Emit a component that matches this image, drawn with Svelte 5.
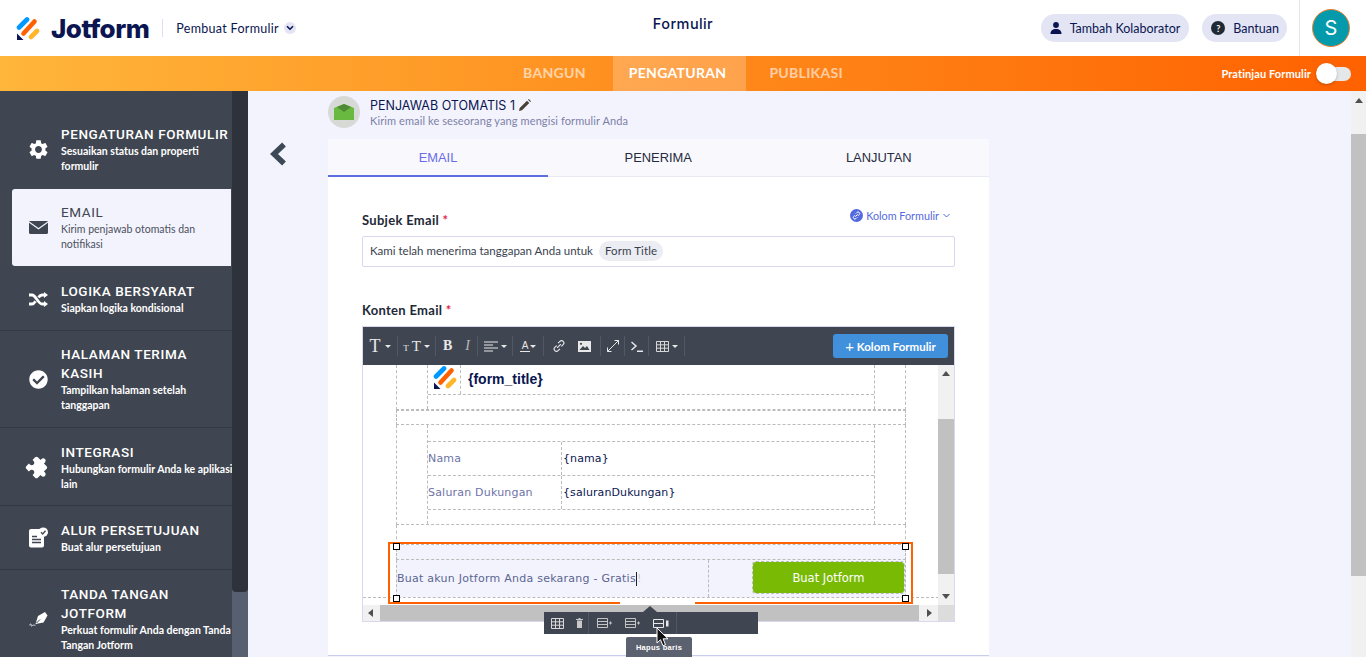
<script lang="ts">
  const menu = [
    { id: 'form', title: ['PENGATURAN FORMULIR'], sub: ['Sesuaikan status dan properti', 'formulir'], h: 77, up: true },
    { id: 'email', title: ['EMAIL'], sub: ['Kirim penjawab otomatis dan', 'notifikasi'], h: 77, active: true },
    { id: 'logic', title: ['LOGIKA BERSYARAT'], sub: ['Siapkan logika kondisional'], h: 65, low: true },
    { id: 'thanks', title: ['HALAMAN TERIMA', 'KASIH'], sub: ['Tampilkan halaman setelah', 'tanggapan'], h: 97 },
    { id: 'integ', title: ['INTEGRASI'], sub: ['Hubungkan formulir Anda ke aplikasi', 'lain'], h: 78, low: true },
    { id: 'flow', title: ['ALUR PERSETUJUAN'], sub: ['Buat alur persetujuan'], h: 64 },
    { id: 'sign', title: ['TANDA TANGAN', 'JOTFORM'], sub: ['Perkuat formulir Anda dengan Tanda', 'Tangan Jotform'], h: 97, low: true }
  ];
</script>

{#snippet logo(size)}
  <svg width={size} height={size} viewBox="0 0 24 24" class="logo-mark">
    <path d="M3 11.5 11 3.5" stroke="#0099ff" stroke-width="4.6" stroke-linecap="round" />
    <path d="M7.5 17.5 18.5 5.5" stroke="#ff6100" stroke-width="4.6" stroke-linecap="round" />
    <path d="M15 21 21 15" stroke="#ffb629" stroke-width="4.6" stroke-linecap="round" />
    <path d="M1 17.5V24h6.5z" fill="#0a1551" />
  </svg>
{/snippet}

<div class="page">
  <header class="top">
    <div class="brand">
      {@render logo(24)}
      <span class="wordmark">Jotform</span>
      <span class="brand-sep"></span>
      <span class="builder">Pembuat Formulir</span>
      <span class="builder-caret">
        <svg width="8" height="6" viewBox="0 0 8 6"><path d="M1 1.2 4 4.2 7 1.2" fill="none" stroke="#0a1551" stroke-width="1.6" /></svg>
      </span>
    </div>
    <div class="form-title">Formulir</div>
    <div class="actions">
      <button class="pill" type="button">
        <svg width="12" height="12" viewBox="0 0 12 12"><circle cx="6" cy="3" r="2.9" fill="#0a1551" /><path d="M.5 12c0-3.2 2-5 5.5-5s5.5 1.800 5.5 5z" fill="#0a1551" /></svg>
        Tambah Kolaborator
      </button>
      <button class="pill help" type="button">
        <span class="q">?</span>
        Bantuan
      </button>
      <div class="user"><span class="avatar">S</span></div>
    </div>
  </header>

  <nav class="tabs-bar">
    <div></div>
    <div class="nav-items">
      <span>BANGUN</span>
      <span class="on">PENGATURAN</span>
      <span>PUBLIKASI</span>
    </div>
    <div class="preview">
      Pratinjau Formulir
      <span class="switch"><span class="knob"></span></span>
    </div>
  </nav>

  <div class="body">
    <aside class="side">
      {#each menu as item}
        <div class="item" class:active={item.active} class:low={item.low} class:up={item.up} style="height:{item.h}px">
          <span class="item-icon">
            {#if item.id === 'form'}
              <svg width="23" height="23" viewBox="0 0 24 24" fill="currentColor"><path d="M19.14 12.94c.04-.3.06-.61.06-.94 0-.32-.02-.64-.07-.94l2.03-1.58c.18-.14.23-.41.12-.61l-1.92-3.32c-.12-.22-.37-.29-.59-.22l-2.39.96c-.5-.38-1.03-.7-1.62-.94l-.36-2.54c-.04-.24-.24-.41-.48-.41h-3.84c-.24 0-.43.17-.47.41l-.36 2.54c-.59.24-1.13.57-1.62.94l-2.39-.96c-.22-.08-.47 0-.59.22L2.74 8.87c-.12.21-.08.47.12.61l2.03 1.58c-.05.3-.09.63-.09.94s.02.64.07.94l-2.03 1.58c-.18.14-.23.41-.12.61l1.92 3.32c.12.22.37.29.59.22l2.39-.96c.5.38 1.03.7 1.62.94l.36 2.54c.05.24.24.41.48.41h3.84c.24 0 .44-.17.47-.41l.36-2.54c.59-.24 1.13-.56 1.62-.94l2.39.96c.22.08.47 0 .59-.22l1.92-3.32c.12-.22.07-.47-.12-.61l-2.01-1.58zM12 15.6c-1.98 0-3.6-1.62-3.6-3.6s1.620-3.600 3.600-3.600 3.600 1.620 3.600 3.600-1.620 3.600-3.600 3.600z" /></svg>
            {:else if item.id === 'email'}
              <svg width="19" height="13" viewBox="0 0 19 13"><path d="M1 0h17c.4 0 .7.1 1 .3L9.500 7 0 .3C.3.100.6 0 1 0zM0 1.700 9.500 8.500 19 1.700V11.500c0 .8-.6 1.500-1.500 1.500h-16C.6 13 0 12.300 0 11.500z" fill="currentColor" /></svg>
            {:else if item.id === 'logic'}
              <svg width="19" height="15" viewBox="0 0 19 15" fill="none" stroke="currentColor" stroke-width="2.800"><path d="M0 3h3c4 0 6 9 10 9h2M0 12h3c1.500 0 2.500-1.300 3.500-2.800M9.500 5.300C10.500 4 11.500 3 13 3h2" /><path d="M15 0l4 3-4 3zM15 9l4 3-4 3z" fill="currentColor" stroke="none" /></svg>
            {:else if item.id === 'thanks'}
              <svg width="19" height="19" viewBox="0 0 512 512" fill="currentColor"><path d="M504 256c0 136.967-111.033 248-248 248S8 392.967 8 256 119.033 8 256 8s248 111.033 248 248zM227.314 387.314l184-184c6.248-6.248 6.248-16.379 0-22.627l-22.627-22.627c-6.248-6.249-16.379-6.249-22.628 0L216 308.118l-70.059-70.059c-6.248-6.248-16.379-6.248-22.628 0l-22.627 22.627c-6.248 6.248-6.248 16.379 0 22.627l104 104c6.249 6.249 16.379 6.249 22.628.001z" /></svg>
            {:else if item.id === 'integ'}
              <svg width="23" height="23" viewBox="0 0 24 24" fill="currentColor" transform="rotate(45)"><path d="M20.500 11H19V7c0-1.100-.9-2-2-2h-4V3.500C13 2.120 11.880 1 10.500 1S8 2.120 8 3.500V5H4c-1.100 0-1.990.9-1.990 2v3.800H3.500c1.490 0 2.700 1.210 2.700 2.700s-1.210 2.700-2.700 2.700H2V20c0 1.100.9 2 2 2h3.800v-1.500c0-1.490 1.210-2.700 2.700-2.700 1.490 0 2.700 1.210 2.700 2.700V22H17c1.100 0 2-.9 2-2v-4h1.500c1.380 0 2.500-1.120 2.500-2.500S21.880 11 20.500 11z" /></svg>
            {:else if item.id === 'flow'}
              <svg width="19" height="21" viewBox="0 0 19 21"><path d="M2 2h9.500a6 6 0 0 0 3.500 8V18.500a2 2 0 0 1-2 2H2a2 2 0 0 1-2-2V4a2 2 0 0 1 2-2z" fill="currentColor" /><path d="M3 9.500h5M3 12.500h9M3 15.500h9" stroke="#404651" stroke-width="1.300" /><circle cx="14.200" cy="5.200" r="4.800" fill="currentColor" /><path d="M12 5.300 13.700 7 16.500 3.800" fill="none" stroke="#404651" stroke-width="1.300" /></svg>
            {:else}
              <svg width="19" height="16" viewBox="0 0 19 16"><path d="M9 5 16 1l2.500 3.500L14.500 11.500 6.500 13z" fill="currentColor" /><path d="M7.500 12 11 8.500" stroke="#404651" stroke-width="1" /><path d="M0 14.500c1-1 1.500-2 2-1.500s-.5 2 .5 2 1-1 2-1 1 .7 2 .2" fill="none" stroke="currentColor" stroke-width=".8" /></svg>
            {/if}
          </span>
          <div class="item-text">
            {#each item.title as line}<div class="item-title">{line}</div>{/each}
            {#each item.sub as line}<div class="item-sub">{line}</div>{/each}
          </div>
        </div>
      {/each}
    </aside>
    <div class="side-scroll"><div class="side-thumb"></div></div>

    <main class="content">
      <div class="back-col">
        <svg width="19" height="24" viewBox="0 0 19 24"><path d="M16 2.500 6 12l10 9.500" fill="none" stroke="#3d4856" stroke-width="5.500" /></svg>
      </div>
      <div class="form-col">
        <div class="resp-head">
          <span class="resp-icon">
            <svg width="20" height="16" viewBox="0 0 20 16"><path d="M0 4 10 0l10 4v12H0z" fill="#69b83f" /><path d="M3 3 10 0l7 3-7 5z" fill="#4f8a35" /></svg>
          </span>
          <div>
            <div class="resp-title">
              PENJAWAB OTOMATIS 1
              <svg width="12" height="12" viewBox="0 0 12 12"><path d="M0 12l.7-3L8 1.700 10.300 4 3 11.300zM9 .8l.8-.8L12 2.200l-.8.8z" fill="#4a4038" /></svg>
            </div>
            <div class="resp-sub">Kirim email ke seseorang yang mengisi formulir Anda</div>
          </div>
        </div>

        <div class="panel">
          <div class="panel-tabs">
            <span class="tab on">EMAIL</span>
            <span class="tab">PENERIMA</span>
            <span class="tab">LANJUTAN</span>
          </div>
          <div class="panel-body">
            <div class="field-head">
              <label class="field-label" for="subject">Subjek Email <em>*</em></label>
              <span class="form-fields">
                <span class="link-dot">
                  <svg width="9" height="9" viewBox="0 0 9 9" fill="none" stroke="#fff" stroke-width="1"><path d="M3.800 2.600 5 1.400a1.500 1.500 0 0 1 2.200 2.200L6 4.800M5.200 6.400 4 7.600A1.500 1.500 0 0 1 1.800 5.400L3 4.200M3.300 5.700l2.400-2.400" /></svg>
                </span>
                Kolom Formulir
                <svg width="7" height="5" viewBox="0 0 7 5" class="ff-caret"><path d="M.5 1 3.500 4 6.500 1" fill="none" stroke="#5369e0" stroke-width="1" /></svg>
              </span>
            </div>
            <div class="subject" id="subject">
              Kami telah menerima tanggapan Anda untuk
              <span class="chip">Form Title</span>
            </div>

            <div class="field-label content-label">Konten Email <em>*</em></div>
            <div class="editor">
              <div class="toolbar">
                <span class="t-btn t-serif big">T<i class="caret"></i></span>
                <b class="t-sep"></b>
                <span class="t-btn t-serif"><small>T</small>T<i class="caret"></i></span>
                <b class="t-sep"></b>
                <span class="t-btn wide"><span class="t-bold">B</span><span class="t-ital">I</span></span>
                <b class="t-sep"></b>
                <span class="t-btn">
                  <svg width="14" height="11" viewBox="0 0 14 11" stroke="#e8e8e8" stroke-width="1.200"><path d="M0 1h14M0 4h9M0 7h14M0 10h9" /></svg>
                  <i class="caret"></i>
                </span>
                <b class="t-sep"></b>
                <span class="t-btn tight">
                  <span class="a-color">A</span><i class="caret"></i>
                </span>
                <b class="t-sep"></b>
                <span class="t-btn wide">
                  <svg width="12" height="12" viewBox="0 0 13 13" fill="none" stroke="#e8e8e8" stroke-width="1.200"><path d="M5.500 3.500 7.500 1.500a2.400 2.400 0 0 1 3.500 3.500L9 7M7.500 9.500 5.500 11.500A2.400 2.400 0 0 1 2 8l2-2M4.500 8.500l4-4" /></svg>
                  <svg width="13" height="11" viewBox="0 0 13 11"><path d="M0 0h13v11H0z" fill="#e8e8e8" /><path d="M1.500 9 5 5l2 2 2-2 2.500 4z" fill="#3f4551" /><circle cx="3" cy="2.800" r="1.100" fill="#3f4551" /></svg>
                </span>
                <b class="t-sep"></b>
                <span class="t-btn">
                  <svg width="12" height="12" viewBox="0 0 12 12" fill="none" stroke="#e8e8e8" stroke-width="1"><path d="M.5 11.500 11.500.5M7.500.5h4v4M.5 7.500v4h4" /></svg>
                </span>
                <b class="t-sep"></b>
                <span class="t-btn">
                  <svg width="12" height="11" viewBox="0 0 12 11" fill="none" stroke="#e8e8e8" stroke-width="1.500"><path d="M.5 1 5 5 .5 9M6 10.200h6" /></svg>
                </span>
                <b class="t-sep"></b>
                <span class="t-btn">
                  <svg width="13" height="11" viewBox="0 0 13 11" fill="none" stroke="#d8d8d8" stroke-width="1"><path d="M.5.500h12v10H.5zM.5 3.800h12M.5 7.200h12M4.500.5v10M8.500.5v10" /></svg>
                  <i class="caret"></i>
                </span>
                <b class="t-sep"></b>
                <button class="add-field" type="button"><span>+</span> Kolom Formulir</button>
              </div>

              <div class="frame">
                <div class="doc-wrap">
                  <div class="doc">
                    <div class="d-row r-top">
                      <div class="inner">
                        <div class="logo-row">
                          <div class="logo-cell">{@render logo(24)}</div>
                          <div class="doc-title">&#123;form_title&#125;</div>
                        </div>
                      </div>
                    </div>
                    <div class="d-row r-gap"></div>
                    <div class="d-row r-data">
                      <div class="inner data">
                        <div class="data-row">
                          <div class="k">Nama</div>
                          <div class="v">&#123;nama&#125;</div>
                        </div>
                        <div class="data-row">
                          <div class="k">Saluran Dukungan</div>
                          <div class="v">&#123;saluranDukungan&#125;</div>
                        </div>
                      </div>
                    </div>
                    <div class="d-row r-before"></div>
                    <div class="d-row r-sel-top"></div>
                    <div class="d-row r-cta">
                      <div class="cta-text">Buat akun Jotform Anda sekarang - Gratis<span class="text-caret"></span><span class="faint">!</span></div>
                      <div class="cta-btn-cell"><div class="cta-btn">Buat Jotform</div></div>
                    </div>
                    <div class="r-end"></div>
                  </div>
                </div>
                <div class="v-scroll">
                  <span class="arr up"></span>
                  <div class="v-track"><div class="v-thumb"></div></div>
                  <span class="arr down"></span>
                </div>
                <div class="h-scroll">
                  <span class="arr left"></span>
                  <div class="h-track"><div class="h-thumb"></div></div>
                  <span class="arr right"></span>
                  <span class="corner"></span>
                </div>

                <!-- selection box and its floating tools lie over the document -->
                <div class="sel">
                  <i class="sel-b one"></i><i class="sel-b two"></i>
                  <i class="handle tl"></i><i class="handle tr"></i><i class="handle bl"></i><i class="handle br"></i>
                </div>
              </div>
            </div>
          </div>
        </div>
      </div>

      <div class="table-tools">
        <i class="tool-arrow"></i>
        <svg width="13" height="11" viewBox="0 0 13 11" fill="none" stroke="#d8d8d8" stroke-width="1"><path d="M.5.500h12v10H.5zM.5 3.800h12M.5 7.200h12M4.500.5v10M8.500.5v10" /></svg>
        <svg width="7" height="10" viewBox="0 0 7 10" class="trash"><path d="M0 1h7v1H0zM1 2.500h5V10H1zM2.500 0h2v1h-2z" fill="#c9c9c9" /></svg>
        <b class="tool-sep"></b>
        <svg width="15" height="10" viewBox="0 0 15 10" fill="none" stroke="#c4c4c4" class="row-a"><path d="M.5.500h10v9H.5zM.5 3.500h10M.5 6.500h10M12 5h3M13.500 3.500v3" /></svg>
        <svg width="15" height="10" viewBox="0 0 15 10" fill="none" stroke="#c4c4c4" class="row-b"><path d="M.5.500h10v9H.5zM.5 3.500h10M.5 6.500h10M12 5h3M13.500 3.500v3" /></svg>
        <svg width="16" height="9" viewBox="0 0 16 9" class="row-b"><path d="M.5.500h10v8H.5zM.5 4.500h10" fill="none" stroke="#e8e8e8" /><path d="M13 1.500h2.500v6H13z" fill="#e8e8e8" /></svg>
        <b class="tool-sep last"></b>
      </div>
      <div class="tool-tip">Hapus baris</div>
      <svg class="cursor" width="13" height="20" viewBox="0 0 13 20"><path d="M1 1v15l3.500-3.300 2.400 6 2.600-1.100-2.400-5.800H12z" fill="#111" stroke="#fff" stroke-width="1" /></svg>

      <div class="page-scroll">
        <span class="arr up"></span>
        <div class="page-thumb"></div>
      </div>
    </main>
  </div>
</div>

<style>
  :global(body) {
    margin: 0;
    font-family: Inter, "Noto Sans", sans-serif;
    color: #0a1551;
  }

  .page {
    height: 657px;
    overflow: hidden;
    display: flex;
    flex-direction: column;
    background: #f3f3fe;
  }

  /* top bar */
  .top {
    height: 56px;
    flex: none;
    background: #fff;
    display: grid;
    grid-template-columns: 1fr auto 1fr;
    align-items: center;
  }
  .brand {
    display: flex;
    align-items: center;
    padding-left: 16px;
  }
  .logo-mark {
    display: block;
    flex: none;
  }
  .wordmark {
    margin-left: 11px;
    font-size: 26px;
    font-weight: 800;
    letter-spacing: -0.5px;
    font-family: Inter, sans-serif;
  }
  .brand-sep {
    width: 1px;
    height: 18px;
    background: #dfe0ee;
    margin: 0 13px 0 13px;
  }
  .builder {
    font-size: 12.5px;
    font-family: Lato, sans-serif;
    letter-spacing: 0.3px;
  }
  .builder-caret {
    width: 12px;
    height: 12px;
    margin-left: 5px;
    border-radius: 50%;
    background: #e3e5f5;
    display: flex;
    align-items: center;
    justify-content: center;
  }
  .form-title {
    font-size: 14.5px;
    font-weight: 500;
    margin-top: -10px;
    letter-spacing: 0.4px;
  }
  .actions {
    display: flex;
    align-items: center;
    justify-content: flex-end;
    height: 56px;
  }
  .pill {
    height: 28px;
    border: 0;
    border-radius: 14px;
    background: #e3e5f5;
    color: #0a1551;
    display: flex;
    align-items: center;
    gap: 8px;
    padding: 0 9px;
    font-family: Lato, sans-serif;
    font-size: 12.5px;
    margin-right: 13px;
  }
  .pill.help {
    margin-right: 12px;
    padding-right: 8px;
  }
  .q {
    width: 14px;
    height: 14px;
    border-radius: 50%;
    background: #1f2a35;
    color: #fff;
    font-size: 9px;
    font-weight: 700;
    display: flex;
    align-items: center;
    justify-content: center;
  }
  .user {
    height: 56px;
    border-left: 1px solid #e3e5e8;
    padding: 0 16px 0 12px;
    display: flex;
    align-items: center;
  }
  .avatar {
    width: 36px;
    height: 36px;
    border-radius: 50%;
    background: #049aab;
    border: 1px solid #f08030;
    color: #fff;
    font-size: 20px;
    display: flex;
    align-items: center;
    justify-content: center;
  }

  /* orange nav */
  .tabs-bar {
    height: 35px;
    flex: none;
    background: linear-gradient(90deg, #ffb63a 0%, #ff6100 100%);
    display: grid;
    grid-template-columns: 1fr auto 1fr;
    color: #fff;
  }
  .nav-items {
    display: flex;
    align-items: stretch;
    font-family: Lato, sans-serif;
    font-size: 14px;
    font-weight: 700;
    letter-spacing: 0.3px;
  }
  .nav-items span {
    display: flex;
    align-items: center;
    padding-bottom: 3px;
    opacity: 0.6;
  }
  .nav-items span:first-child {
    margin-right: 27px;
  }
  .nav-items .on {
    opacity: 1;
    background: rgba(255, 255, 255, 0.22);
    padding: 0 20px 3px 16px;
    margin-right: 23px;
  }
  .preview {
    display: flex;
    align-items: center;
    justify-content: flex-end;
    font-family: Lato, sans-serif;
    font-size: 11px;
    font-weight: 700;
    letter-spacing: 0.1px;
    padding-right: 15px;
  }
  .switch {
    width: 32px;
    height: 14px;
    margin-left: 8px;
    border-radius: 7px;
    background: #e5e8ea;
    position: relative;
  }
  .knob {
    position: absolute;
    left: -3px;
    top: -4px;
    width: 21px;
    height: 21px;
    border-radius: 50%;
    background: #fff;
    box-shadow: 0 1px 3px rgba(0, 0, 0, 0.25);
  }

  /* body */
  .body {
    flex: 1;
    min-height: 0;
    display: flex;
  }
  .side {
    width: 232px;
    flex: none;
    background: #404651;
    padding-top: 21px;
    overflow: hidden;
    color: #fff;
  }
  .item {
    box-sizing: border-box;
    display: flex;
    align-items: center;
    padding-left: 29px;
    border-bottom: 1px solid #343a44;
  }
  .item.low {
    padding-top: 2px;
  }
  .item.up {
    padding-bottom: 2px;
  }
  .item:first-child,
  .item.active {
    border-bottom: 0;
  }
  .item.active {
    background: #f3f3fe;
    color: #3f4551;
    margin-left: 12px;
    margin-right: 1px;
    padding-left: 17px;
    border-radius: 3px 0 0 3px;
  }
  .item-icon {
    width: 19px;
    height: 24px;
    flex: none;
    display: flex;
    align-items: center;
    justify-content: center;
  }
  .item-icon svg {
    flex: none;
  }
  .item-text {
    margin-left: 13px;
    white-space: nowrap;
  }
  .item-title {
    font-family: Roboto, sans-serif;
    font-size: 13.5px;
    line-height: 19px;
    font-weight: 500;
    letter-spacing: 0.6px;
  }
  .item-sub {
    font-family: Lato, sans-serif;
    font-size: 10.5px;
    line-height: 15px;
    font-weight: 700;
  }
  .item.active .item-title {
    font-weight: 400;
  }
  .item.active .item-sub {
    font-weight: 400;
    color: #4b505c;
  }
  .side-scroll {
    width: 16px;
    flex: none;
    background: #566070;
  }
  .side-thumb {
    height: 501px;
    background: #2e323b;
    border-radius: 0 0 4px 4px;
  }

  .content {
    flex: 1;
    min-width: 0;
    display: flex;
    position: relative;
    overflow: hidden;
  }
  .back-col {
    width: 80px;
    flex: none;
    padding-top: 51px;
    padding-left: 20px;
    box-sizing: border-box;
  }
  .form-col {
    width: 661px;
    flex: none;
  }
  .resp-head {
    height: 48px;
    display: flex;
    align-items: flex-start;
    gap: 10px;
    padding-top: 5px;
    box-sizing: border-box;
  }
  .resp-icon {
    width: 32px;
    height: 32px;
    border-radius: 50%;
    background: #d7d9d6;
    display: flex;
    align-items: center;
    justify-content: center;
  }
  .resp-title {
    font-size: 12.5px;
    line-height: 16px;
    margin-top: 2px;
    font-family: Inter, sans-serif;
  }
  .resp-title svg {
    vertical-align: -1px;
  }
  .resp-sub {
    font-family: Lato, sans-serif;
    font-size: 11px;
    line-height: 15px;
    margin-top: -1px;
    letter-spacing: 0.1px;
    color: #7c81a6;
  }
  .panel {
    height: 516px;
    background: #fff;
    border-bottom: 1px solid #c9cdf0;
  }
  .panel-tabs {
    display: grid;
    grid-template-columns: 220px 1fr 1fr;
    height: 38px;
    background: #f9f9fd;
    box-shadow: inset 0 -1px 0 #e8e9f5;
  }
  .tab {
    display: flex;
    align-items: center;
    justify-content: center;
    padding-bottom: 2px;
    font-family: "Liberation Sans", sans-serif;
    font-size: 12.9px;
    color: #272b3f;
  }
  .tab.on {
    color: #6a6be8;
    box-shadow: inset 0 -2px 0 #5c6fe0;
  }
  .panel-body {
    padding: 35px 34px 0;
  }
  .field-head {
    display: flex;
    justify-content: space-between;
    align-items: flex-start;
    height: 24px;
  }
  .field-label {
    font-family: Lato, sans-serif;
    font-size: 13px;
    font-weight: 700;
    line-height: 16px;
    letter-spacing: 0.3px;
    color: #222836;
    display: block;
  }
  .field-label em {
    font-style: normal;
    color: #e0264f;
  }
  .form-fields {
    display: flex;
    align-items: center;
    gap: 3px;
    margin: -3px 5px 0 0;
    font-family: Lato, sans-serif;
    font-size: 10.8px;
    color: #5369e0;
  }
  .ff-caret {
    margin-left: 1px;
  }
  .link-dot {
    width: 13px;
    height: 13px;
    border-radius: 50%;
    background: #5369e0;
    display: flex;
    align-items: center;
    justify-content: center;
  }
  .subject {
    height: 29px;
    border: 1px solid #d8d9ee;
    border-radius: 2px;
    display: flex;
    align-items: center;
    gap: 6px;
    padding: 0 0 2px 7px;
    box-sizing: content-box;
    height: 27px;
    font-family: Lato, sans-serif;
    font-size: 11.5px;
    color: #3a3f4f;
  }
  .chip {
    height: 20px;
    padding: 0 6px;
    border-radius: 10px;
    background: #ecedf3;
    display: flex;
    align-items: center;
    letter-spacing: 0.1px;
  }
  .content-label {
    margin-top: 35px;
    margin-bottom: 8px;
  }

  /* editor */
  .editor {
    width: 593px;
    border: 1px solid #d8d9ee;
    box-sizing: border-box;
  }
  .toolbar {
    height: 38px;
    background: #3f4551;
    display: grid;
    grid-template-columns: 34px 1px 37px 1px 41px 1px 34px 1px 30px 1px 56px 1px 23px 1px 23px 1px 35px 1px 1fr;
    align-items: center;
    color: #e8e8e8;
  }
  .t-btn {
    display: flex;
    align-items: center;
    justify-content: center;
    gap: 3px;
    font-size: 13px;
    height: 38px;
  }
  .t-btn.wide {
    gap: 13px;
  }
  .t-btn.tight {
    gap: 0;
  }
  .t-serif {
    font-family: "Liberation Serif", serif;
    font-size: 15px;
  }
  .t-serif small {
    font-size: 9px;
    margin-top: 4px;
  }
  .t-serif.big {
    font-size: 18px;
    gap: 4px;
  }
  .t-bold {
    font-family: "Liberation Serif", serif;
    font-size: 14px;
    font-weight: 700;
  }
  .t-ital {
    font-family: "Liberation Serif", serif;
    font-size: 14px;
    font-style: italic;
    color: #bbb;
  }
  .caret {
    width: 0;
    height: 0;
    border: 3px solid transparent;
    border-top-color: #e8e8e8;
    border-bottom: 0;
  }
  .a-color {
    font-family: "Liberation Sans", sans-serif;
    font-size: 10px;
    line-height: 11px;
    border-bottom: 1px solid #e8e8e8;
    padding: 0 2px;
  }
  .t-sep {
    width: 1px;
    height: 20px;
    background: #525865;
  }
  .add-field {
    justify-self: end;
    margin-right: 6px;
    width: 115px;
    height: 24px;
    border: 0;
    border-radius: 3px;
    background: #4190dc;
    color: #fff;
    font-family: Lato, sans-serif;
    font-size: 11.5px;
    font-weight: 700;
  }
  .add-field span {
    font-size: 15px;
    font-weight: 400;
    line-height: 10px;
    vertical-align: -1px;
  }
  .frame {
    height: 256px;
    position: relative;
    display: grid;
    grid-template-columns: 1fr 16px;
    grid-template-rows: 240px 16px;
  }
  .doc-wrap {
    overflow: hidden;
    padding-left: 33px;
  }
  .doc {
    width: 510px;
    font-family: "DejaVu Sans", sans-serif;
  }
  .d-row {
    box-sizing: border-box;
    border: 1px dashed #bbb;
    border-top: 0;
    background: #fff;
  }
  .r-top {
    height: 45px;
    padding-left: 30px;
  }
  .r-gap {
    height: 15px;
    border-top: 1px dashed #bbb;
  }
  .r-data {
    height: 100px;
    padding-left: 30px;
  }
  .r-before {
    height: 20px;
    background: linear-gradient(#fff 17px, #f3f3fe 17px);
  }
  .r-sel-top {
    height: 15px;
    background: #f3f3fe;
  }
  .r-cta {
    height: 37px;
    display: grid;
    grid-template-columns: 312px 1fr;
    background: #f3f3fe;
    border-bottom: 0;
  }
  .r-end {
    height: 8px;
    margin: 0 -33px;
    border-top: 1px dashed #bbb;
  }
  .inner {
    width: 448px;
    box-sizing: border-box;
    height: 100%;
    border-left: 1px dashed #bbb;
    border-right: 1px dashed #bbb;
  }
  .logo-row {
    height: 29px;
    display: flex;
    align-items: center;
    border-bottom: 1px dashed #bbb;
  }
  .logo-cell {
    width: 33px;
    height: 29px;
    box-sizing: border-box;
    padding-left: 5px;
    border-right: 1px dashed #bbb;
    display: flex;
    align-items: flex-start;
  }
  .doc-title {
    font-family: "Liberation Sans", sans-serif;
    font-weight: 700;
    font-size: 14px;
    margin-left: 7px;
    margin-top: -1px;
  }
  .inner.data {
    padding-top: 16px;
  }
  .data-row {
    display: grid;
    grid-template-columns: 134px 1fr;
    height: 33px;
    border-top: 1px dashed #bbb;
    font-size: 11px;
  }
  .data-row:last-child {
    border-bottom: 1px dashed #bbb;
  }
  .k {
    color: #6d73a6;
    display: flex;
    align-items: center;
    letter-spacing: 0.2px;
    border-right: 1px dashed #bbb;
  }
  .v {
    display: flex;
    align-items: center;
    padding-left: 1px;
    letter-spacing: 0.1px;
    color: #0a1551;
  }
  .cta-text {
    border-right: 1px dashed #bbb;
    font-size: 11px;
    letter-spacing: 0.25px;
    color: #5a6690;
    display: flex;
    align-items: center;
    white-space: nowrap;
  }
  .text-caret {
    width: 1px;
    height: 14px;
    background: #222;
  }
  .faint {
    color: #c6c8d8;
  }
  .cta-btn-cell {
    padding: 2px 1px 0 44px;
  }
  .cta-btn {
    height: 31px;
    outline: 1px dashed #bbb;
    background: #79ba05;
    border-radius: 3px;
    color: #fff;
    font-size: 11.5px;
    display: flex;
    align-items: center;
    justify-content: center;
  }

  .arr {
    width: 0;
    height: 0;
    border: 4px solid transparent;
    display: block;
  }
  .arr.up {
    border-bottom: 5px solid #505050;
    border-top: 0;
  }
  .arr.down {
    border-top: 5px solid #505050;
    border-bottom: 0;
  }
  .arr.left {
    border-right: 5px solid #505050;
    border-left: 0;
  }
  .arr.right {
    border-left: 5px solid #505050;
    border-right: 0;
  }
  .v-scroll {
    background: #f1f1f1;
    display: flex;
    flex-direction: column;
    align-items: center;
    justify-content: space-between;
    padding: 6px 0;
    box-sizing: border-box;
  }
  .v-track {
    flex: 1;
    width: 16px;
  }
  .v-thumb {
    height: 155px;
    margin-top: 43px;
    background: #c1c1c1;
  }
  .h-scroll {
    grid-column: 1 / 3;
    background: #f1f1f1;
    display: flex;
    align-items: center;
    padding-left: 5px;
  }
  .h-track {
    flex: 1;
    height: 16px;
    padding: 0 8px 0 7px;
  }
  .h-thumb {
    height: 16px;
    background: #c1c1c1;
  }
  .h-scroll .arr.right {
    margin-right: 6px;
  }
  .corner {
    width: 16px;
    height: 16px;
    background: #dcdcdc;
  }
  .sel {
    position: absolute;
    left: 25px;
    top: 177px;
    width: 525px;
    height: 62px;
    box-sizing: border-box;
    border: 2px solid #ff6100;
    border-bottom: 0;
  }
  .sel-b {
    position: absolute;
    bottom: 0;
    height: 2px;
    background: #ff6100;
  }
  .sel-b.one {
    left: -2px;
    width: 232px;
  }
  .sel-b.two {
    right: -2px;
    width: 218px;
  }
  .handle {
    position: absolute;
    width: 7px;
    height: 7px;
    box-sizing: border-box;
    background: #fff;
    border: 1px solid #000;
  }
  .handle.tl { left: 3px; top: -1px; }
  .handle.tr { right: 2px; top: -1px; }
  .handle.bl { left: 3px; bottom: 2px; }
  .handle.br { right: 2px; bottom: 2px; }

  /* floating table tools */
  .table-tools {
    position: absolute;
    left: 296px;
    top: 521px;
    width: 214px;
    height: 22px;
    background: #3f4551;
    display: flex;
    align-items: center;
    padding-left: 7px;
    box-sizing: border-box;
  }
  .trash {
    margin-left: 12px;
  }
  .tool-sep {
    width: 1px;
    height: 22px;
    background: #525865;
    margin-left: 5px;
  }
  .tool-sep.last {
    margin-left: 7px;
  }
  .row-a {
    margin-left: 8px;
  }
  .row-b {
    margin-left: 13px;
  }
  .tool-arrow {
    position: absolute;
    left: 99px;
    top: -6px;
    border: 7px solid transparent;
    border-bottom: 6px solid #3f4551;
    border-top: 0;
  }
  .cursor {
    position: absolute;
    left: 408px;
    top: 536px;
  }
  .tool-tip {
    position: absolute;
    left: 378px;
    top: 546px;
    width: 66px;
    height: 20px;
    background: #5c6170;
    border-radius: 2px 2px 0 0;
    color: #fff;
    font-family: "Liberation Sans", sans-serif;
    font-size: 7.5px;
    font-weight: 700;
    letter-spacing: 0.3px;
    display: flex;
    align-items: center;
    justify-content: center;
  }
  .page-scroll {
    margin-left: auto;
    width: 15px;
    flex: none;
    background: #f1f1f1;
    display: flex;
    flex-direction: column;
    align-items: center;
    padding-top: 7px;
    box-sizing: border-box;
  }
  .page-thumb {
    margin-top: 31px;
    width: 15px;
    height: 442px;
    background: #c1c1c1;
  }
</style>
